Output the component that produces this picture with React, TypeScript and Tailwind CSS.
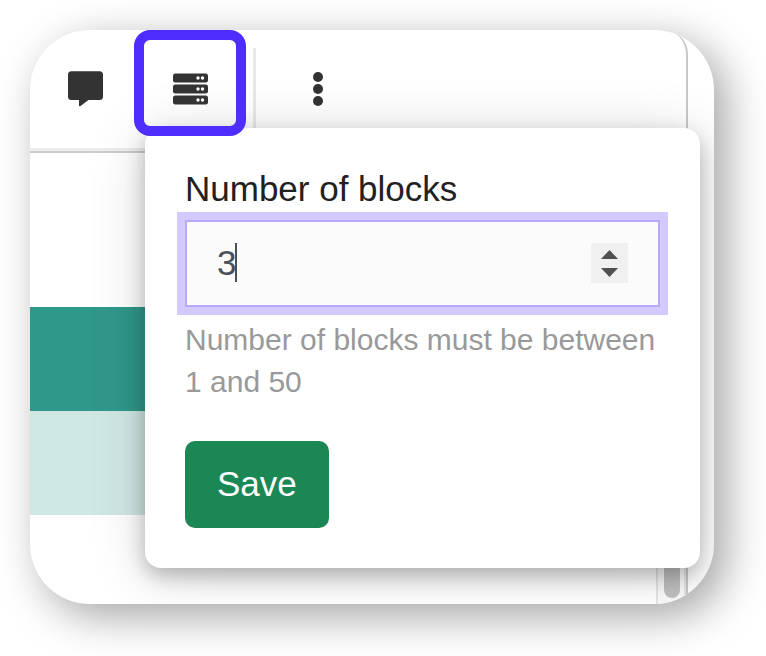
import { useState } from "react";

const MIN_BLOCKS = 1;
const MAX_BLOCKS = 50;

function CommentIcon() {
  return (
    <svg className="h-9 w-9" viewBox="0 0 36 36" fill="currentColor" aria-hidden="true">
      <path d="M3.500 0.300H31.500a3.500 3.500 0 0 1 3.500 3.500v21.700a3.500 3.500 0 0 1-3.500 3.500H20.500l-8 6c-.7.500-1.500.300-1.500-.5V29H3.500A3.500 3.500 0 0 1 0 25.500V3.800A3.500 3.500 0 0 1 3.500 0.300Z" />
    </svg>
  );
}

function BlocksIcon() {
  return (
    <svg className="h-9 w-9" viewBox="0 0 36 36" aria-hidden="true">
      {[2.5, 13.5, 24.5].map((y) => (
        <g key={y}>
          <rect x="1" y={y} width="35" height="8.900" rx="2.200" fill="#333" />
          <circle cx="26" cy={y + 4.5} r="1.700" fill="#fff" />
          <circle cx="30.500" cy={y + 4.5} r="1.700" fill="#fff" />
        </g>
      ))}
    </svg>
  );
}

function MoreIcon() {
  return (
    <svg className="h-9 w-9" viewBox="0 0 36 36" fill="currentColor" aria-hidden="true">
      <circle cx="18" cy="6" r="5" />
      <circle cx="18" cy="18" r="5" />
      <circle cx="18" cy="30" r="5" />
    </svg>
  );
}

function BlocksPopover() {
  const [blocks, setBlocks] = useState(3);

  const step = (delta: number) =>
    setBlocks((n) => Math.min(MAX_BLOCKS, Math.max(MIN_BLOCKS, n + delta)));

  return (
    <form
      onSubmit={(e) => e.preventDefault()}
      className="absolute top-[98px] left-[11px] z-10 w-[555px] rounded-2xl bg-white p-10 shadow-[0_8px_20px_rgba(0,0,0,0.24),0_6px_56px_rgba(0,0,0,0.16)]"
    >
      <label htmlFor="blocks" className="mb-[10px] block text-[35px] leading-[42px] text-[#212121]">
        Number of blocks
      </label>

      <div className="relative flex h-[87px] items-center border-2 border-[#b8a9fb] bg-[#fbfbfb] pr-[30px] pb-px pl-[30px] ring-8 ring-[#d4caff]">
        <input
          id="blocks"
          type="number"
          min={MIN_BLOCKS}
          max={MAX_BLOCKS}
          value={blocks}
          onChange={(e) => setBlocks(Number(e.target.value))}
          aria-describedby="blocks-hint"
          className="min-w-0 flex-1 bg-transparent text-[35px] leading-[42px] text-[#495057] caret-transparent outline-none [appearance:textfield] [&::-webkit-inner-spin-button]:appearance-none"
        />
        {/* caret */}
        <span className="absolute top-[21px] left-12 h-[39px] w-[2px] bg-[#495057]" />
        <div className="flex h-10 w-[37px] flex-col bg-[#f0f0f0] text-[#505050]">
          <button
            type="button"
            aria-label="Increase"
            onClick={() => step(1)}
            className="flex flex-1 items-end justify-center pb-1"
          >
            <svg className="h-[9px] w-[17px]" viewBox="0 0 17 9" fill="currentColor">
              <path d="M8.500 0 17 9H0Z" />
            </svg>
          </button>
          <button
            type="button"
            aria-label="Decrease"
            onClick={() => step(-1)}
            className="flex flex-1 items-start justify-center pt-[5px]"
          >
            <svg className="h-[9px] w-[17px]" viewBox="0 0 17 9" fill="currentColor">
              <path d="M0 0h17L8.500 9Z" />
            </svg>
          </button>
        </div>
      </div>

      <p id="blocks-hint" className="mt-3 text-[30px] leading-[42px] text-[#999]">
        Number of blocks must be between {MIN_BLOCKS} and {MAX_BLOCKS}
      </p>

      <button
        type="submit"
        className="mt-[38px] block h-[87px] rounded-[10px] bg-[#1a8754] px-8 pb-[2px] text-[35px] leading-[42px] text-white"
      >
        Save
      </button>
    </form>
  );
}

export default function App() {
  return (
    <div className="overflow-hidden bg-white pt-[30px] pr-[52px] pb-[52px] pl-[30px] font-['Liberation_Sans',Arial,sans-serif]">
      <main className="flex overflow-hidden rounded-[60px] bg-white shadow-[12px_12px_44px_rgba(0,0,0,0.36)]">
        <div className="min-w-0 flex-1 rounded-tr-3xl border-r-2 border-[#c8c8c8]">
          {/* Toolbar */}
          <div className="border-b-2 border-[#ccc]">
            <div className="flex h-[121px] items-start border-b-[3px] border-[#ededed] text-[#333]">
              <button
                type="button"
                aria-label="Comment"
                className="flex h-[118px] w-[104px] items-center pl-[38px]"
              >
                <CommentIcon />
              </button>
              <div className="relative">
                <button
                  type="button"
                  aria-label="Number of blocks"
                  className="relative z-20 flex h-[106px] w-28 items-center justify-center rounded-2xl border-[10px] border-[#4f2dff] pt-3"
                >
                  <BlocksIcon />
                </button>
                <BlocksPopover />
              </div>
              <div className="mt-[18px] ml-[7px] h-[100px] w-[3px] bg-[#e9e9e9]" />
              <button
                type="button"
                aria-label="More"
                className="ml-11 flex h-[118px] items-center"
              >
                <MoreIcon />
              </button>
            </div>
          </div>

          {/* Document */}
          <div className="flex">
            <div className="flex-1">
              <div className="h-[154px]" />
              <div className="h-[104px] bg-[#30988b]" />
              <div className="h-[104px] bg-[#d0e8e4]" />
              <div className="h-[89px]" />
            </div>
            <div className="flex w-[30px] flex-col border-x-2 border-[#e4e4e4] bg-[#fafafa] pt-40 pb-[6px] pl-[6px]">
              <div className="w-4 flex-1 rounded-full bg-[#c1c1c1]" />
            </div>
          </div>
        </div>
        <div className="w-[26px]" />
      </main>
    </div>
  );
}
